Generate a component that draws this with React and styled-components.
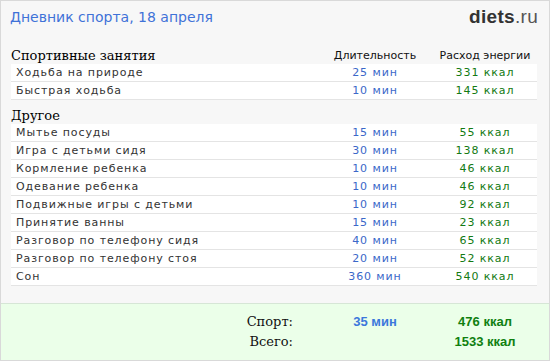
import React from 'react'
import styled, { createGlobalStyle } from 'styled-components'

const sport = [
  { name: 'Ходьба на природе', min: 25, kcal: 331 },
  { name: 'Быстрая ходьба', min: 10, kcal: 145 },
]

const other = [
  { name: 'Мытье посуды', min: 15, kcal: 55 },
  { name: 'Игра с детьми сидя', min: 30, kcal: 138 },
  { name: 'Кормление ребенка', min: 10, kcal: 46 },
  { name: 'Одевание ребенка', min: 10, kcal: 46 },
  { name: 'Подвижные игры с детьми', min: 10, kcal: 92 },
  { name: 'Принятие ванны', min: 15, kcal: 23 },
  { name: 'Разговор по телефону сидя', min: 40, kcal: 65 },
  { name: 'Разговор по телефону стоя', min: 20, kcal: 52 },
  { name: 'Сон', min: 360, kcal: 540 },
]

function Section({ title, items, first }) {
  return (
    <div>
      <HeadRow first={first}>
        <SectionTitle>{title}</SectionTitle>
        {first && <ColTitle>Длительность</ColTitle>}
        {first && <ColTitle>Расход энергии</ColTitle>}
      </HeadRow>
      {items.map(item => (
        <Row key={item.name}>
          <Name>{item.name}</Name>
          <Duration>{item.min} мин</Duration>
          <Energy>{item.kcal} ккал</Energy>
        </Row>
      ))}
    </div>
  )
}

export default function App() {
  return (
    <>
      <Global />
      <Frame>
        <TopBar>
          <Title>Дневник спорта, 18 апреля</Title>
          <Logo><b>diets</b>.ru</Logo>
        </TopBar>
        <Content>
          <Section title="Спортивные занятия" items={sport} first />
          <Section title="Другое" items={other} />
        </Content>
        <Footer>
          <TotalRow>
            <TotalLabel>Спорт:</TotalLabel>
            <TotalDuration>35 мин</TotalDuration>
            <TotalEnergy>476 ккал</TotalEnergy>
          </TotalRow>
          <TotalRow>
            <TotalLabel>Всего:</TotalLabel>
            <span />
            <TotalEnergy>1533 ккал</TotalEnergy>
          </TotalRow>
        </Footer>
      </Frame>
    </>
  )
}

const Global = createGlobalStyle`
  body {
    margin: 0;
    background: #fff;
  }
`

const Frame = styled.div`
  width: 550px;
  height: 361px;
  box-sizing: border-box;
  border: 1px solid #d9d9d9;
  background: #f7f7f7;
  display: flex;
  flex-direction: column;
  font-family: "DejaVu Sans", Verdana, sans-serif;
`

const TopBar = styled.div`
  height: 32px;
  display: flex;
  align-items: center;
  justify-content: space-between;
  padding: 0 11px 0 9px;
`

const Title = styled.div`
  color: #3f72d8;
  font-size: 14px;
`

const Logo = styled.div`
  font-family: "Liberation Sans", Arial, sans-serif;
  font-size: 19px;
  letter-spacing: 0.3px;
  color: #555;
  b {
    color: #333;
  }
`

const Content = styled.div`
  padding: 13px 12px 0 10px;
`

const Grid = styled.div`
  display: grid;
  grid-template-columns: 1fr 116px 104px;
  align-items: center;
`

const HeadRow = styled(Grid)`
  height: 18px;
  margin-top: ${p => (p.first ? '0' : '6px')};
`

const SectionTitle = styled.div`
  font-family: "DejaVu Serif", serif;
  font-size: 13px;
  color: #000;
`

const ColTitle = styled.div`
  font-size: 11px;
  color: #111;
  text-align: center;
`

const Row = styled(Grid)`
  height: 17px;
  background: #fff;
  border-bottom: 1px solid #e4e4e4;
  font-size: 11px;
  letter-spacing: 0.9px;
`

const Name = styled.div`
  padding-left: 5px;
  color: #333;
`

const Duration = styled.div`
  color: #3b68c9;
  text-align: center;
`

const Energy = styled.div`
  color: #137a13;
  text-align: center;
`

const Footer = styled.div`
  margin-top: auto;
  height: 57px;
  box-sizing: border-box;
  padding: 7px 0 9px;
  background: #ebffe9;
  border-top: 1px solid #d6e6d6;
`

const TotalRow = styled(Grid)`
  height: 20px;
  padding: 0 12px 0 10px;
`

const TotalLabel = styled.div`
  font-family: "DejaVu Serif", serif;
  font-size: 13px;
  color: #111;
  text-align: right;
  padding-right: 24px;
`

const TotalDuration = styled.div`
  font-family: "Liberation Sans", Arial, sans-serif;
  font-weight: bold;
  font-size: 13px;
  color: #3b78dc;
  text-align: center;
`

const TotalEnergy = styled(TotalDuration)`
  color: #108010;
`
